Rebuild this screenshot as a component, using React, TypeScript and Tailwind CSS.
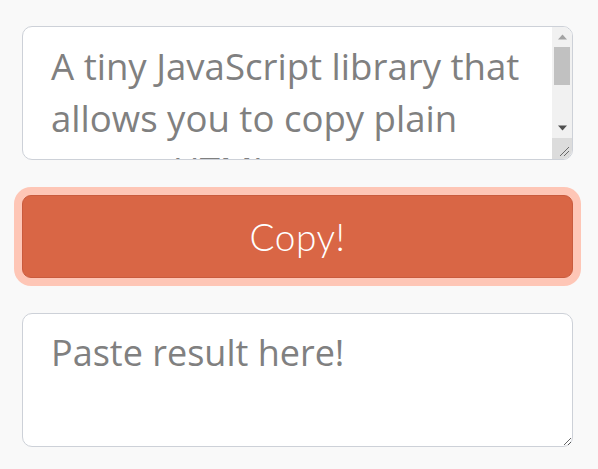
import { useState } from 'react';

const SOURCE_TEXT =
  'A tiny JavaScript library that allows you to copy plain text or HTML to your clipboard with a single click.';

// Classic (non-overlay) scrollbar drawn over the first textarea
function FakeScrollbar() {
  return (
    <div className="pointer-events-none absolute top-[1px] right-[1px] bottom-[1px] flex w-[20px] flex-col rounded-tr-[9px] rounded-br-[9px] overflow-hidden">
      <div className="flex flex-1 flex-col bg-[#f1f1f1]">
        <div className="flex h-[20px] items-center justify-center">
          <svg width="9" height="6" viewBox="0 0 9 6">
            <path d="M0 5.5 L4.5 0.5 L9 5.5 Z" fill="#a3a3a3" />
          </svg>
        </div>
        <div className="mx-[2px] h-[38px] bg-[#c1c1c1]" />
        <div className="flex-1" />
        <div className="flex h-[20px] items-center justify-center">
          <svg width="9" height="6" viewBox="0 0 9 6">
            <path d="M0 0.5 L4.5 5.5 L9 0.5 Z" fill="#505050" />
          </svg>
        </div>
      </div>
      <div className="relative h-[21px] bg-[#dcdcdc]">
        <svg className="absolute right-[2px] bottom-[2px]" width="11" height="11" viewBox="0 0 11 11">
          <path d="M1 10 L10 1 M5 10 L10 5" stroke="#6a6a6a" strokeWidth="1" />
        </svg>
      </div>
    </div>
  );
}

export default function App() {
  const [source, setSource] = useState(SOURCE_TEXT);
  const [result, setResult] = useState('');

  const handleCopy = () => {
    navigator.clipboard?.writeText(source).catch(() => {});
  };

  return (
    <div
      className="min-h-[469px] w-full bg-[#f9f9f9] px-[22px] pt-[26px]"
      style={{ fontFamily: '"Open Sans", "Noto Sans", sans-serif' }}
    >
      <div className="flex w-[551px] flex-col gap-[35px]">
        <div className="relative">
          <textarea
            value={source}
            onChange={(e) => setSource(e.target.value)}
            className="block h-[134px] w-full resize-none overflow-hidden rounded-[10px] border-[1.5px] border-[#cdd1d8] bg-white pt-[13px] pr-[44px] pl-[28px] text-[36.6px] leading-[52px] text-[#808080] outline-none"
          />
          <FakeScrollbar />
        </div>

        <button
          onClick={handleCopy}
          className="h-[83px] w-full rounded-[9px] border border-[#c95b3d] bg-[#d96645] text-[37px] font-light tracking-[0.5px] text-white shadow-[0_0_0_8px_#fec6b6]"
          style={{ fontFamily: '"Lato", "Noto Sans", sans-serif' }}
        >
          Copy!
        </button>

        <textarea
          value={result}
          onChange={(e) => setResult(e.target.value)}
          placeholder="Paste result here!"
          className="block h-[134px] w-full rounded-[10px] border-[1.5px] border-[#cdd1d8] bg-white pt-[13px] pl-[28px] text-[36px] leading-[52px] text-[#808080] outline-none placeholder:text-[#808080]"
        />
      </div>
    </div>
  );
}
